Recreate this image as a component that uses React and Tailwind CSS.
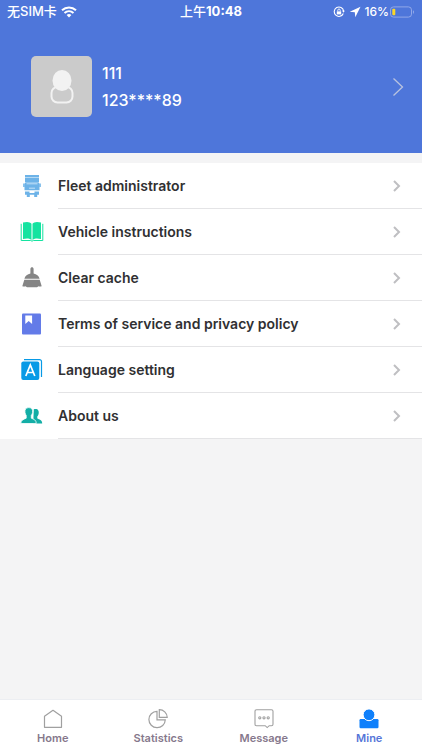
import React from "react";

function TruckIcon() {
  return (
    <svg width="24" height="24" viewBox="0 0 24 24" fill="#6db3e8" aria-hidden="true">
      <path d="M5 1h14v2.400H5zM5 4h14v4H5z" />
      <path d="M5.500 8.300h13l1 1.700v6.300h-15V10z" />
      <path d="M3.200 9.500h1.500v3.500H3.200zM19.300 9.500h1.500v3.500h-1.500z" />
      <path d="M6.500 9.800h11M9 14.200h6" stroke="#d9edfb" strokeWidth="0.800" />
      <path d="M5 17.400h4.500v1.600h5v-1.600H19v3.400H5z" />
      <path d="M6.800 20h3v3h-3zM14.200 20h3v3h-3z" />
    </svg>
  );
}

function BookIcon() {
  return (
    <svg width="24" height="24" viewBox="0 0 24 24" fill="#14e3a0" aria-hidden="true">
      <path d="M3 2.500 7 2c2 0 3.600.7 4.500 1.800V20c-1.400-1-3.200-1.400-4.500-1.400l-4 .4z" />
      <path d="M21 2.500 17 2c-2 0-3.600.7-4.500 1.800V20c1.400-1 3.200-1.400 4.500-1.400l4 .4z" />
      <path d="M1.200 3.800v16.700h9.300l1.500.6 1.500-.6h9.300V3.800" fill="none" stroke="#14e3a0" strokeWidth="1" />
    </svg>
  );
}

function BroomIcon() {
  return (
    <svg width="24" height="24" viewBox="0 0 24 24" fill="#858585" aria-hidden="true">
      <path d="M10.400 3c0-2.200 3.200-2.200 3.200 0v4.500c2.800.6 5.400 2.200 6 5.300H4.400c.6-3.100 3.200-4.700 6-5.300z" />
      <path d="M4.300 13.700h15.400l2 6.500c-1.200.2-2.200.3-3.200 0l-1.500 1h-10l-1.500-1c-1 .3-2 .2-3.200 0z" />
    </svg>
  );
}

function TermsIcon() {
  return (
    <svg width="24" height="24" viewBox="0 0 24 24" aria-hidden="true">
      <rect x="2" y="1.500" width="19" height="21" rx="1" fill="#637be8" />
      <path d="M5.300 3.500h6.800v8.500L8.700 9l-3.400 3z" fill="#fff" />
    </svg>
  );
}

function LanguageIcon() {
  return (
    <svg width="24" height="24" viewBox="0 0 24 24" aria-hidden="true">
      <rect x="1.300" y="3.500" width="18" height="18.500" rx="2" fill="#079ae6" />
      <path d="M4 1.600h15.500a2 2 0 0 1 2 2v15.400" fill="none" stroke="#079ae6" strokeWidth="1.200" />
      <path d="m5.800 18 4.500-11 4.500 11M7.400 14.500h5.800" fill="none" stroke="#fff" strokeWidth="1.700" />
    </svg>
  );
}

function PeopleIcon() {
  return (
    <svg width="24" height="24" viewBox="0 0 24 24" aria-hidden="true" fill="#13aea6">
      <path d="M13.800 5.300c3.500-1.300 5.700 1 4.800 4.700-.3 1.200-.8 1.800-1.300 2.400v2c1.800.9 4.900 1.300 4.900 5.100h-9z" />
      <path d="M8.800 3.600c3.200 0 4.200 2.200 3.800 5-.2 1.300-.7 2-1.300 2.700v2.900c2.300 1 5 1.600 5 5.300H.8c0-3.700 3.400-4.300 5.400-5.300v-2.900c-.6-.7-1-1.400-1.200-2.700-.4-2.800.6-5 3.800-5z" stroke="#fff" strokeWidth="0.800" />
    </svg>
  );
}

function Chevron() {
  return (
    <svg width="10" height="14" viewBox="0 0 10 14" fill="none" stroke="#bfbfc2" strokeWidth="2" aria-hidden="true">
      <path d="m2 2 5 5-5 5" />
    </svg>
  );
}

function HomeIcon() {
  return (
    <svg width="22" height="22" viewBox="0 0 22 22" fill="none" stroke="#a0a0a0" strokeWidth="1.200" aria-hidden="true">
      <path d="M2.500 8.300 11 2.300l8.500 6v11h-17z" strokeLinejoin="round" />
    </svg>
  );
}

function StatisticsIcon() {
  return (
    <svg width="22" height="22" viewBox="0 0 22 22" fill="none" stroke="#a0a0a0" strokeWidth="1.200" aria-hidden="true">
      <path d="M10 3.300a8.200 8.200 0 1 0 8.300 8.500H10z" />
      <path d="M12.300 1.700v7.600h7.900a7.900 7.900 0 0 0-7.900-7.600z" />
    </svg>
  );
}

function MessageIcon() {
  return (
    <svg width="22" height="22" viewBox="0 0 22 22" fill="none" stroke="#a0a0a0" strokeWidth="1.100" aria-hidden="true">
      <path d="M3.500 1.700h15a1.500 1.500 0 0 1 1.500 1.500v13a1.500 1.500 0 0 1-1.500 1.500h-2.300l-2 1.900-2-1.900H3.500A1.500 1.500 0 0 1 2 16.200v-13a1.500 1.500 0 0 1 1.500-1.500z" />
      <circle cx="6.800" cy="9.800" r="1.100" />
      <circle cx="11" cy="9.800" r="1.100" />
      <circle cx="15.200" cy="9.800" r="1.100" />
    </svg>
  );
}

function MineIcon() {
  return (
    <svg width="22" height="22" viewBox="0 0 22 22" fill="#0f80fb" aria-hidden="true">
      <rect x="1.500" y="11" width="19" height="9.300" rx="1.200" />
      <circle cx="11" cy="6.800" r="5.900" stroke="#fff" strokeWidth="1" />
    </svg>
  );
}

const rows = [
  ["Fleet administrator", TruckIcon],
  ["Vehicle instructions", BookIcon],
  ["Clear cache", BroomIcon],
  ["Terms of service and privacy policy", TermsIcon],
  ["Language setting", LanguageIcon],
  ["About us", PeopleIcon],
];

const tabs = [
  ["Home", HomeIcon],
  ["Statistics", StatisticsIcon],
  ["Message", MessageIcon],
  ["Mine", MineIcon],
];

function StatusBar() {
  return (
    <div className="grid h-6 grid-cols-[1fr_auto_1fr] items-center px-[7px] text-[13px] font-medium">
      <div className="flex items-center gap-1">
        <span>无SIM卡</span>
        <svg width="16" height="12" viewBox="0 0 16 12" fill="none" stroke="#fff" strokeWidth="2" aria-hidden="true">
          <path d="M1 4.300c4-3.800 10-3.800 14 0M3.500 7c2.600-2.400 6.400-2.400 9 0" />
          <path d="M5.600 9c1.500-1.200 3.300-1.200 4.800 0L8 11.600z" fill="#fff" stroke="none" />
        </svg>
      </div>
      <div>
        上午<span className="font-bold">10:48</span>
      </div>
      <div className="flex items-center justify-end gap-1">
        <svg width="12" height="12" viewBox="0 0 12 12" fill="none" stroke="#fff" strokeWidth="1.100" aria-hidden="true">
          <path d="M10.300 7.500a4.700 4.700 0 1 1 .3-2.500" />
          <path d="m9 4.600 2.800.2-1.300 2z" fill="#fff" stroke="none" />
          <path d="M3.800 5.400h4.400v3H3.800z" fill="#fff" stroke="none" />
          <path d="M4.800 5.500V4.200a1.200 1.200 0 0 1 2.400 0v1.300" strokeWidth="0.900" />
        </svg>
        <svg width="12" height="12" viewBox="0 0 12 12" fill="#fff" aria-hidden="true">
          <path d="M11.500.8.800 5.700l5 .5.500 5z" />
        </svg>
        <span className="text-xs">16%</span>
        <svg width="26" height="12" viewBox="0 0 26 12" className="-ml-1" aria-hidden="true">
          <rect x="1.500" y="0.900" width="21" height="10.200" rx="3" fill="none" stroke="#92a8e8" />
          <rect x="3.300" y="2.700" width="3" height="6.600" rx="1" fill="#fcd726" />
          <path d="M24 4.200c1.400.5 1.400 3.100 0 3.600z" fill="#92a8e8" />
        </svg>
      </div>
    </div>
  );
}

export default function App() {
  return (
    <div className="flex min-h-screen flex-col bg-[#f4f4f5] font-['Inter','Noto_Sans_CJK_SC',sans-serif] text-[#303032]">
      <header className="bg-[#4e76da] pb-9 text-white">
        <StatusBar />
        <button type="button" className="mt-8 flex w-full items-center pr-[17px] pl-[31px] text-left">
          <span className="flex size-[61px] items-center justify-center rounded-[5px] bg-[#cbcbcb]">
            <svg width="26" height="36" viewBox="0 0 26 36" aria-hidden="true">
              <rect x="2.500" y="18" width="21" height="15.500" rx="6" fill="none" stroke="#f2f2f2" strokeWidth="2" />
              <ellipse cx="13" cy="11.500" rx="9.500" ry="10.500" fill="#f2f2f2" />
            </svg>
          </span>
          <span className="ml-2.5 flex-1 text-base leading-[27px] font-medium">
            <span className="block">111</span>
            <span className="block">123****89</span>
          </span>
          <svg width="14" height="20" viewBox="0 0 14 20" fill="none" stroke="#b9c3df" strokeWidth="1.300" aria-hidden="true">
            <path d="m2.500 1.500 9 8.500-9 8.500" />
          </svg>
        </button>
      </header>

      <main className="mt-2.5 flex-1">
        <ul className="bg-white">
          {rows.map(([label, Icon]) => (
            <li key={label}>
              <button type="button" className="flex h-[46px] w-full items-center pl-5 text-left">
                <Icon />
                <span className="ml-3.5 flex h-full flex-1 items-center justify-between border-b border-[#e4e4e6] pr-5 text-sm font-semibold">
                  {label}
                  <Chevron />
                </span>
              </button>
            </li>
          ))}
        </ul>
      </main>

      <nav className="grid h-[51px] grid-cols-4 border-t border-[#eceef2] bg-white">
        {tabs.map(([label, Icon]) => (
          <a
            key={label}
            href={"#" + label.toLowerCase()}
            aria-current={label === "Mine" ? "page" : undefined}
            className={
              "flex flex-col items-center pt-2 text-[11px] leading-4 font-semibold " +
              (label === "Mine" ? "text-[#5575d8]" : "text-[#86788c]")
            }
          >
            <Icon />
            {label}
          </a>
        ))}
      </nav>
    </div>
  );
}
